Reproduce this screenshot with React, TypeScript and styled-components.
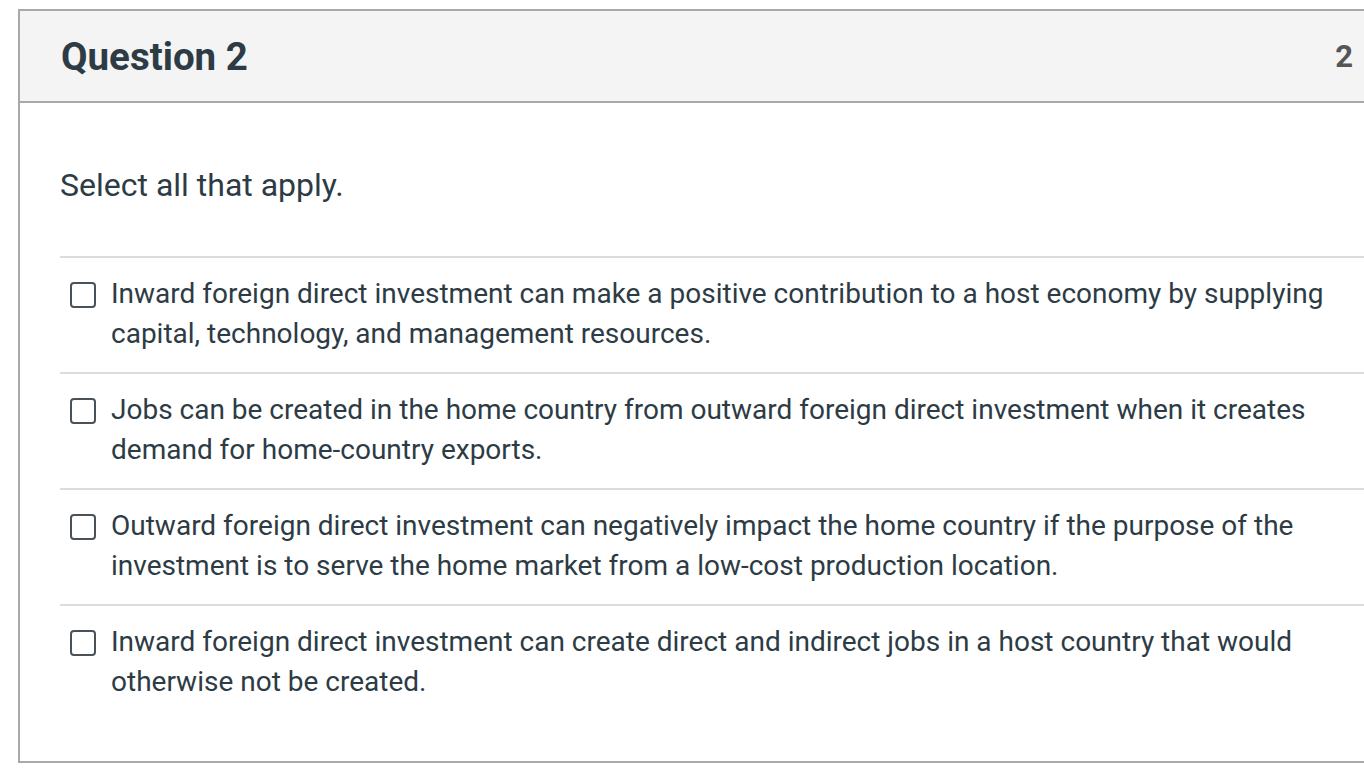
import React from "react";
import styled, { createGlobalStyle } from "styled-components";

const Global = createGlobalStyle`
  html, body { margin: 0; padding: 0; background: #fff; }
  body { font-family: Roboto, "Liberation Sans", sans-serif; color: #2d3b45; overflow: hidden; }
`;

const Page = styled.div`
  padding: 9px 0 0 18px;
`;

const Card = styled.section`
  width: 1380px;
  border: 2px solid #a9a9a9;
  box-sizing: border-box;
  height: 754px;
  display: flex;
  flex-direction: column;
`;

const Header = styled.header`
  background: #f4f4f4;
  border-bottom: 2px solid #a9a9a9;
  height: 92px;
  box-sizing: border-box;
  display: flex;
  align-items: center;
  justify-content: space-between;
  padding: 0 43px 0 41px;
`;

const Title = styled.h2`
  margin: 0;
  font-size: 38.5px;
  font-weight: 700;
  color: #2d3b45;
`;

const Points = styled.span`
  font-size: 31px;
  font-weight: 700;
  color: #555;
`;

const Body = styled.div`
  padding: 62px 0 0 40px;
`;

const Prompt = styled.p`
  margin: 0 0 51px;
  font-size: 32px;
  line-height: 40px;
  color: #2d3b45;
`;

const Option = styled.label`
  display: flex;
  align-items: flex-start;
  gap: 15px;
  border-top: 2px solid #dcdcdc;
  padding: 16px 0 18px 10px;
  min-height: 116px;
  box-sizing: border-box;
`;

const Box = styled.span`
  flex: none;
  width: 22px;
  height: 22px;
  margin-top: 8px;
  border: 2px solid #4a5259;
  border-radius: 4px;
`;

const OptionText = styled.span`
  font-size: 28px;
  line-height: 40px;
  color: #2d3b45;
  max-width: 1230px;
`;

const options = [
  "Inward foreign direct investment can make a positive contribution to a host economy by supplying capital, technology, and management resources.",
  "Jobs can be created in the home country from outward foreign direct investment when it creates demand for home-country exports.",
  "Outward foreign direct investment can negatively impact the home country if the purpose of the investment is to serve the home market from a low-cost production location.",
  "Inward foreign direct investment can create direct and indirect jobs in a host country that would otherwise not be created.",
];

export default function App() {
  return (
    <Page>
      <Global />
      <Card>
        <Header>
          <Title>Question 2</Title>
          <Points>2</Points>
        </Header>
        <Body>
          <Prompt>Select all that apply.</Prompt>
          {options.map((o) => (
            <Option key={o}>
              <Box />
              <OptionText>{o}</OptionText>
            </Option>
          ))}
        </Body>
      </Card>
    </Page>
  );
}
